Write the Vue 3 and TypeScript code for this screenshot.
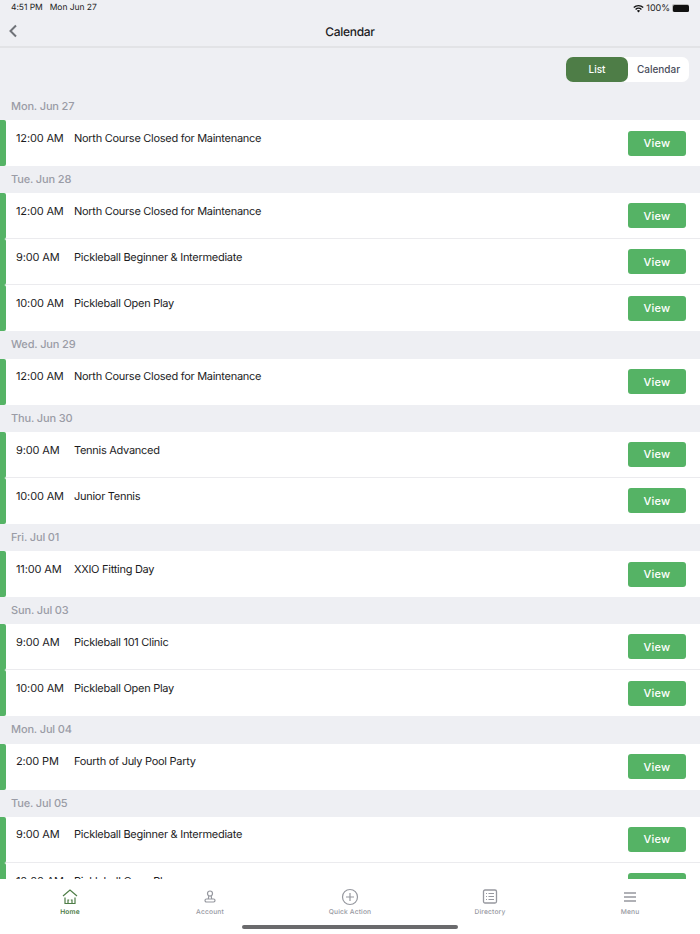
<template>
  <div class="screen">
    <header class="top">
      <div class="status">
        <span class="clock">4:51 PM&nbsp;&nbsp; Mon Jun 27</span>
        <span class="status-right">
          <svg class="wifi" width="11" height="9" viewBox="0 0 11 9">
            <path d="M0.3 3.1A7.3 7.3 0 0 1 10.7 3.1L9.7 4.1A5.9 5.9 0 0 0 1.3 4.1Z" fill="#111" />
            <path d="M2.1 4.9A4.8 4.8 0 0 1 8.9 4.9L7.9 5.9A3.4 3.4 0 0 0 3.1 5.9Z" fill="#111" />
            <path d="M3.9 6.7A2.3 2.3 0 0 1 7.1 6.7L5.5 8.4Z" fill="#111" />
          </svg>
          <span>100%</span>
          <span class="battery"><i></i></span>
        </span>
      </div>
      <div class="nav">
        <svg class="back" width="10" height="14" viewBox="0 0 10 14">
          <path d="M8 1.5 2.500 7 8 12.500" fill="none" stroke="#6f7278" stroke-width="2" />
        </svg>
        <h1>Calendar</h1>
      </div>
    </header>

    <main class="content">
      <div class="toggle-row">
        <div class="toggle">
          <button class="seg active">List</button>
          <button class="seg">Calendar</button>
        </div>
      </div>

      <section v-for="day in days" :key="day.label">
        <h2 class="day">{{ day.label }}</h2>
        <div v-for="item in day.items" :key="item.time + item.title" class="row">
          <span class="time">{{ item.time }}</span>
          <span class="title">{{ item.title }}</span>
          <button class="view">View</button>
        </div>
      </section>
    </main>

    <nav class="tabs">
      <a v-for="tab in tabs" :key="tab.label" class="tab" :class="{ current: tab.label === 'Home' }">
        <svg width="24" height="24" viewBox="0 0 24 24" fill="none" stroke="currentColor" stroke-width="1.2">
          <template v-if="tab.label === 'Home'">
            <path d="M5 11 12 5l7 6" />
            <path d="M7 12.500V18.500h10V12.500" />
            <path d="M10 18.500V15h1.200M14 18.500V15h-1.200" />
          </template>
          <template v-else-if="tab.label === 'Account'">
            <circle cx="12" cy="8.500" r="2.500" />
            <path d="M10.800 11 10.300 14M13.200 11l.5 3" />
            <rect x="7" y="14" width="10" height="3" rx="1.400" />
          </template>
          <template v-else-if="tab.label === 'Quick Action'">
            <circle cx="12" cy="12" r="7.500" />
            <path d="M12 8v8M8 12h8" />
          </template>
          <template v-else-if="tab.label === 'Directory'">
            <rect x="5.500" y="5" width="13" height="13" rx="1.500" stroke-width="1.300" />
            <path d="M8 8.500h1M10.500 8.500H16M8 11.500h1M10.500 11.500H16M8 14.500h1M10.500 14.500H16" />
          </template>
          <template v-else>
            <path d="M6 8h12M6 12h12M6 16h12" stroke-width="1.400" />
          </template>
        </svg>
        <span>{{ tab.label }}</span>
      </a>
      <div class="home-bar"></div>
    </nav>
  </div>
</template>

<script setup lang="ts">
interface CalItem {
  time: string
  title: string
}

interface CalDay {
  label: string
  items: CalItem[]
}

const maintenance = 'North Course Closed for Maintenance'
const pickleMix = 'Pickleball Beginner & Intermediate'
const openPlay = 'Pickleball Open Play'

const days: CalDay[] = [
  { label: 'Mon. Jun 27', items: [{ time: '12:00 AM', title: maintenance }] },
  {
    label: 'Tue. Jun 28',
    items: [
      { time: '12:00 AM', title: maintenance },
      { time: '9:00 AM', title: pickleMix },
      { time: '10:00 AM', title: openPlay }
    ]
  },
  { label: 'Wed. Jun 29', items: [{ time: '12:00 AM', title: maintenance }] },
  {
    label: 'Thu. Jun 30',
    items: [
      { time: '9:00 AM', title: 'Tennis Advanced' },
      { time: '10:00 AM', title: 'Junior Tennis' }
    ]
  },
  { label: 'Fri. Jul 01', items: [{ time: '11:00 AM', title: 'XXIO Fitting Day' }] },
  {
    label: 'Sun. Jul 03',
    items: [
      { time: '9:00 AM', title: 'Pickleball 101 Clinic' },
      { time: '10:00 AM', title: openPlay }
    ]
  },
  { label: 'Mon. Jul 04', items: [{ time: '2:00 PM', title: 'Fourth of July Pool Party' }] },
  {
    label: 'Tue. Jul 05',
    items: [
      { time: '9:00 AM', title: pickleMix },
      { time: '10:00 AM', title: openPlay }
    ]
  }
]

const tabs = [
  { label: 'Home' },
  { label: 'Account' },
  { label: 'Quick Action' },
  { label: 'Directory' },
  { label: 'Menu' }
]
</script>

<style>
html,
body {
  margin: 0;
  background: #eeeff3;
}
</style>

<style scoped>
.screen {
  height: 934px;
  display: flex;
  flex-direction: column;
  overflow: hidden;
  font-family: Inter, "Liberation Sans", sans-serif;
  text-rendering: geometricPrecision;
  background: #eeeff3;
  color: #1c1c1e;
}

.top {
  flex: none;
  border-bottom: 2px solid #e2e3e6;
}

.status {
  height: 16px;
  display: flex;
  align-items: center;
  justify-content: space-between;
  padding: 0 11px;
  font-size: 8.5px;
  letter-spacing: -0.05px;
  color: #222;
}

.status-right {
  display: flex;
  align-items: center;
  gap: 2px;
  font-size: 9px;
}

.battery {
  display: block;
  width: 16px;
  height: 7px;
  padding: 0.5px;
  border-radius: 2px;
  background: #bbb;
}

.battery i {
  display: block;
  height: 100%;
  border-radius: 1.5px;
  background: #111;
}

.nav {
  position: relative;
  height: 30px;
  display: flex;
  align-items: center;
  justify-content: center;
}

.nav h1 {
  margin: 0;
  font-size: 12px;
  font-weight: 500;
  letter-spacing: -0.3px;
  color: #1c1c1e;
}

.back {
  position: absolute;
  left: 8px;
  top: 8px;
}

.content {
  flex: 1;
  min-height: 0;
  overflow: hidden;
}

.toggle-row {
  display: flex;
  justify-content: flex-end;
  padding: 9px 11px 0;
}

.toggle {
  display: flex;
  width: 123px;
  height: 25px;
  border-radius: 7px;
  background: #fff;
}

.seg {
  flex: 1;
  border: 0;
  padding: 0 0 1px;
  border-radius: 7px;
  background: transparent;
  font: 500 10px Inter, "Liberation Sans", sans-serif;
  color: #4a4d5c;
}

.seg.active {
  flex: none;
  width: 62px;
  background: #4e7d47;
  color: #fff;
}

.day {
  height: 27.1px;
  margin: 0;
  padding-left: 11px;
  font-size: 11px;
  font-weight: 500;
  letter-spacing: -0.15px;
  line-height: 27.1px;
  color: #9a9ca6;
}

.toggle-row + section .day {
  height: 38px;
  line-height: 48px;
}

.row {
  position: relative;
  height: 46.1px;
  box-sizing: border-box;
  display: flex;
  align-items: center;
  padding: 0 14px 0 16px;
  background: #fff;
  border-bottom: 1px solid #ebebee;
  font-size: 11px;
  letter-spacing: -0.28px;
}

.row::before {
  content: "";
  position: absolute;
  left: 0;
  top: 0;
  bottom: -1px;
  width: 6px;
  border-radius: 0 2px 2px 0;
  background: #55b365;
}

.row:last-child {
  border-bottom: 0;
}

.row:last-child::before {
  bottom: 0;
}

.time {
  width: 58px;
  flex: none;
  align-self: flex-start;
  margin-top: 10.8px;
  letter-spacing: -0.15px;
}

.title {
  flex: 1;
  align-self: flex-start;
  margin-top: 10.8px;
}

.view {
  width: 58px;
  height: 25px;
  border: 0;
  padding: 0;
  border-radius: 3px;
  background: #55b365;
  color: #fff;
  font: 500 11px Inter, "Liberation Sans", sans-serif;
  letter-spacing: 0.2px;
}

.tabs {
  position: relative;
  flex: none;
  height: 55px;
  display: grid;
  grid-template-columns: repeat(5, 1fr);
  background: #fff;
}

.tab {
  display: flex;
  flex-direction: column;
  align-items: center;
  padding-top: 6px;
  font-size: 6.7px;
  font-weight: 500;
  letter-spacing: 0.15px;
  color: #96989f;
}

.tab span {
  margin-top: -1px;
}

.tab.current {
  color: #4e7d47;
  font-weight: 600;
}

.home-bar {
  position: absolute;
  left: 242px;
  bottom: 5px;
  width: 216px;
  height: 4px;
  border-radius: 2px;
  background: #6a6a6c;
}
</style>
